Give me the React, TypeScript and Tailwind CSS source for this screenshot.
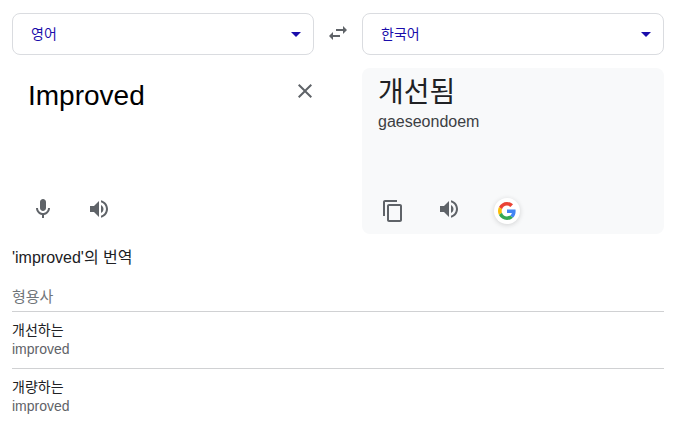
const volumePath =
  "M3 9v6h4l5 5V4L7 9H3zm13.5 3c0-1.77-1.02-3.29-2.5-4.03v8.05c1.48-.73 2.5-2.25 2.5-4.02zM14 3.23v2.06c2.89.86 5 3.54 5 6.71s-2.11 5.85-5 6.71v2.06c4.01-.91 7-4.49 7-8.77s-2.99-7.86-7-8.77z"

function Icon({ d, className }: { d: string; className: string }) {
  return (
    <svg viewBox="0 0 24 24" className={className} fill="#5f6368">
      <path d={d} />
    </svg>
  )
}

function LangSelect({ label }: { label: string }) {
  return (
    <div className="flex h-[42px] items-center justify-between rounded-lg border border-[#dadce0] pl-[18px] pr-[12px]">
      <span className="text-[14px] text-[#1a0dab]">{label}</span>
      <span className="h-0 w-0 border-x-[5px] border-t-[5px] border-x-transparent border-t-[#1a0dab]" />
    </div>
  )
}

function Meaning({ word }: { word: string }) {
  return (
    <div className="h-[57px] border-t border-[#d0d1d3] pt-[9px]">
      <div className="text-[14px] leading-[18px] text-[#202124]">{word}</div>
      <div className="text-[14px] leading-[20px] text-[#5f6368]">improved</div>
    </div>
  )
}

export default function App() {
  return (
    <div className="h-[427px] w-[682px] overflow-hidden bg-white px-3 pt-[13px] font-['Liberation_Sans','Noto_Sans_CJK_KR',sans-serif]">
      <div className="grid w-[652px] grid-cols-[302px_48px_302px]">
        <LangSelect label="영어" />
        <div className="flex items-center justify-center pb-[2px]">
          <Icon d="M6.99 11L3 15l3.99 4v-3H14v-2H6.99v-3zM21 9l-3.99-4v3H10v2h7.01v3L21 9z" className="h-[24px] w-[24px]" />
        </div>
        <LangSelect label="한국어" />

        <div className="mt-[13px] flex h-[166px] flex-col justify-between pb-[13px] pl-[16px] pt-[10px]">
          <div className="flex items-start justify-between">
            <span className="text-[28px] leading-[36px] text-black">Improved</span>
            <Icon d="M19 6.41L17.59 5 12 10.59 6.41 5 5 6.41 10.59 12 5 17.59 6.41 19 12 13.41 17.59 19 19 17.59 13.41 12z" className="mr-[-3px] mt-[1px] h-[24px] w-[24px]" />
          </div>
          <div className="flex items-center gap-[32px] pl-[3px]">
            <Icon d="M12 14c1.66 0 3-1.34 3-3V5c0-1.66-1.34-3-3-3S9 3.34 9 5v6c0 1.66 1.34 3 3 3zM17 11c0 2.76-2.24 5-5 5s-5-2.24-5-5H5c0 3.53 2.61 6.43 6 6.92V21h2v-3.08c3.39-.49 6-3.39 6-6.92h-2z" className="h-[24px] w-[24px]" />
            <Icon d={volumePath} className="h-[24px] w-[24px]" />
          </div>
        </div>
        <div />
        <div className="mt-[13px] flex h-[166px] flex-col justify-between rounded-lg bg-[#f8f9fa] pb-[10px] pl-[16px] pt-[4px]">
          <div>
            <div className="pt-[2px] text-[28px] leading-[38px] text-[#202124]">개선됨</div>
            <div className="text-[16px] leading-[20px] text-[#3c4043]">gaeseondoem</div>
          </div>
          <div className="flex items-center gap-[32px] pl-[3px]">
            <Icon d="M16 1H4c-1.1 0-2 .9-2 2v14h2V3h12V1zm3 4H8c-1.1 0-2 .9-2 2v14c0 1.1.9 2 2 2h11c1.1 0 2-.9 2-2V7c0-1.1-.9-2-2-2zm0 16H8V7h11v14z" className="h-[24px] w-[24px]" />
            <Icon d={volumePath} className="mt-[-4px] h-[24px] w-[24px]" />
            <div className="ml-[1px] flex h-[26px] w-[26px] items-center justify-center rounded-full bg-white shadow-[0_1px_5px_rgba(32,33,36,0.18)]">
              <svg viewBox="0 0 48 48" className="h-[18px] w-[18px]">
                <path fill="#EA4335" d="M24 9.5c3.54 0 6.71 1.22 9.21 3.6l6.85-6.85C35.9 2.38 30.47 0 24 0 14.62 0 6.51 5.38 2.56 13.22l7.98 6.19C12.43 13.72 17.74 9.5 24 9.5z" />
                <path fill="#4285F4" d="M46.98 24.55c0-1.57-.15-3.09-.38-4.55H24v9.02h12.94c-.58 2.96-2.26 5.48-4.78 7.18l7.73 6c4.51-4.18 7.09-10.36 7.09-17.65z" />
                <path fill="#FBBC05" d="M10.53 28.59c-.48-1.45-.76-2.99-.76-4.59s.27-3.14.76-4.59l-7.98-6.19C.92 16.46 0 20.12 0 24c0 3.88.92 7.54 2.56 10.78l7.97-6.19z" />
                <path fill="#34A853" d="M24 48c6.48 0 11.93-2.13 15.89-5.81l-7.73-6c-2.15 1.45-4.92 2.3-8.16 2.3-6.26 0-11.57-4.22-13.47-9.91l-7.98 6.19C6.51 42.62 14.62 48 24 48z" />
              </svg>
            </div>
          </div>
        </div>
      </div>

      <div className="w-[652px]">
        <div className="mt-[14px] text-[16px] leading-[20px] text-[#202124]">'improved'의 번역</div>
        <div className="mt-[19px] h-[24px] text-[15px] leading-[20px] text-[#70757a]">형용사</div>
        <Meaning word="개선하는" />
        <Meaning word="개량하는" />
      </div>
    </div>
  )
}
